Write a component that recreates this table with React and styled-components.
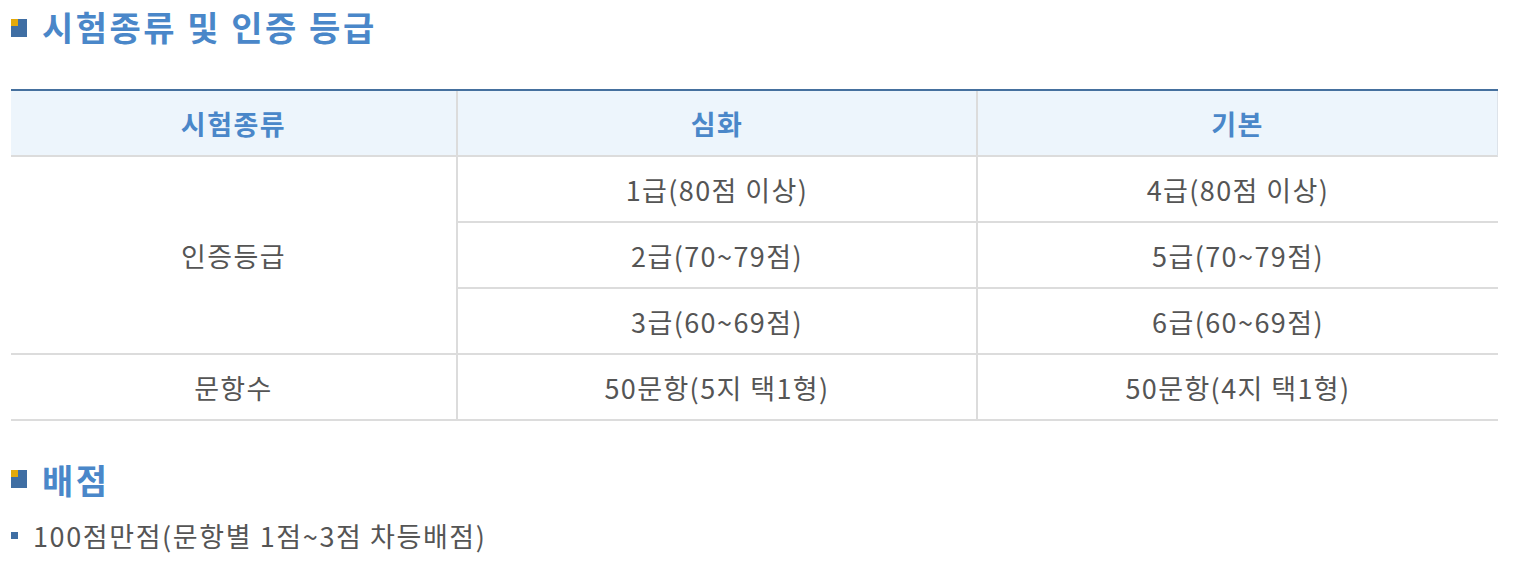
import React from "react";
import styled, { createGlobalStyle } from "styled-components";

const Global = createGlobalStyle`
  html, body { margin: 0; padding: 0; background: #fff; }
  body { font-family: "Noto Sans CJK KR", "Noto Sans", sans-serif; color: #555; }
`;

const Page = styled.div`
  padding: 0 0 0 11px;
  width: 1487px;
`;

const SectionTitle = styled.h2`
  display: flex;
  align-items: center;
  gap: 15px;
  margin: ${(p) => p.$mt || 0}px 0 0;
  height: ${(p) => p.$h}px;
  font-size: 34px;
  font-weight: 700;
  color: #4a87c9;
  letter-spacing: 2.5px;
`;

const TitleIcon = styled.span`
  position: relative;
  width: 16px;
  height: 18px;
  flex: none;
  background: #3f6ea3;
  margin-top: ${(p) => p.$dy || 0}px;
  &::before {
    content: "";
    position: absolute;
    left: 0;
    top: 0;
    width: 7px;
    height: 7px;
    background: #e3a90a;
  }
`;

const Table = styled.table`
  margin-top: 36px;
  width: 1487px;
  table-layout: fixed;
  border-collapse: separate;
  border-spacing: 0;
  border-top: 2px solid #45709e;
`;

const HeadCell = styled.th`
  height: 64px;
  padding: 0;
  background: #edf5fc;
  color: #4a87c9;
  font-size: 27px;
  font-weight: 700;
  letter-spacing: 1.5px;
  text-align: center;
  border-bottom: 2px solid #dcdcdc;
  border-left: ${(p) => (p.$first ? "none" : "2px solid #dcdcdc")};
  border-right: ${(p) => (p.$last ? "1px solid #dde3ea" : "none")};
`;

const Cell = styled.td`
  height: 64px;
  padding: 0;
  font-size: 27px;
  color: #555;
  text-align: center;
  vertical-align: middle;
  border-bottom: 2px solid #dcdcdc;
  border-left: ${(p) => (p.$first ? "none" : "2px solid #dcdcdc")};
  letter-spacing: 1.4px;
`;

const List = styled.ul`
  list-style: none;
  margin: 6px 0 0;
  padding: 0;
`;

const Item = styled.li`
  display: flex;
  align-items: center;
  gap: 15px;
  height: 40px;
  font-size: 27px;
  color: #555;
  letter-spacing: 1.6px;
  &::before {
    content: "";
    width: 7px;
    height: 7px;
    background: #3f6ea3;
    flex: none;
  }
`;

const grades = [
  ["1급(80점 이상)", "4급(80점 이상)"],
  ["2급(70~79점)", "5급(70~79점)"],
  ["3급(60~69점)", "6급(60~69점)"],
];

export default function App() {
  return (
    <Page>
      <Global />
      <SectionTitle $h={53}>
        <TitleIcon $dy={3} />
        시험종류 및 인증 등급
      </SectionTitle>
      <Table>
        <colgroup>
          <col style={{ width: 445 }} />
          <col style={{ width: 520 }} />
          <col style={{ width: 522 }} />
        </colgroup>
        <thead>
          <tr>
            <HeadCell $first>시험종류</HeadCell>
            <HeadCell>심화</HeadCell>
            <HeadCell $last>기본</HeadCell>
          </tr>
        </thead>
        <tbody>
          {grades.map((g, i) => (
            <tr key={i}>
              {i === 0 && (
                <Cell $first rowSpan={3}>
                  인증등급
                </Cell>
              )}
              <Cell>{g[0]}</Cell>
              <Cell>{g[1]}</Cell>
            </tr>
          ))}
          <tr>
            <Cell $first>문항수</Cell>
            <Cell>50문항(5지 택1형)</Cell>
            <Cell>50문항(4지 택1형)</Cell>
          </tr>
        </tbody>
      </Table>
      <SectionTitle $h={60} $mt={28}>
        <TitleIcon />
        배점
      </SectionTitle>
      <List>
        <Item>100점만점(문항별 1점~3점 차등배점)</Item>
      </List>
    </Page>
  );
}
